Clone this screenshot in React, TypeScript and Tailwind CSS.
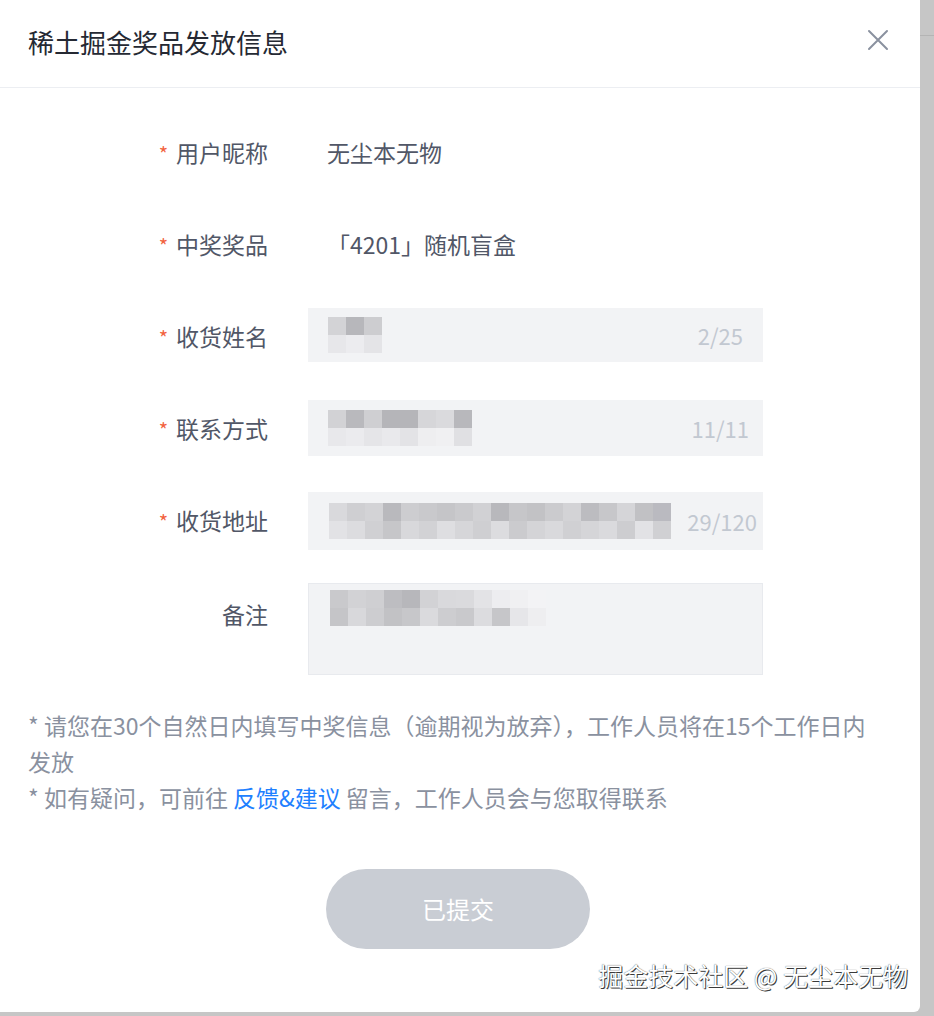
import React from "react";

const FONT = { fontFamily: '"Noto Sans CJK SC", "Noto Sans", sans-serif' };

// mosaic blocks standing in for the blurred personal data
const NAME = [
  ["#d3d3d6", "#b7b7bb", "#cdcdd0"],
  ["#e7e7ea", "#ececef", "#e4e4e7"],
];
const PHONE = [
  ["#d2d2d5", "#b9b9bd", "#cfcfd2", "#b5b5b9", "#b5b5b9", "#d6d6d9", "#dadadd", "#b8b8bc"],
  ["#e8e8eb", "#ebebee", "#e5e5e8", "#e9e9ec", "#e3e3e6", "#eeeef0", "#f0f0f2", "#e0e0e3"],
];
const ADDR = [
  ["#d9d9dc", "#cfcfd2", "#d3d3d6", "#b9b9bd", "#cdcdd0", "#c9c9cc", "#c5c5c8", "#cacacd", "#d1d1d4", "#b8b8bc", "#c6c6c9", "#c2c2c5", "#cbcbce", "#d3d3d6", "#bcbcc0", "#c7c7ca", "#d5d5d8", "#c1c1c4", "#babac0"],
  ["#e2e2e5", "#dcdcdf", "#d0d0d3", "#c6c6c9", "#d8d8db", "#d2d2d5", "#dedee1", "#d6d6d9", "#cfcfd2", "#dcdcdf", "#cbcbce", "#d4d4d7", "#d9d9dc", "#d0d0d3", "#d5d5d8", "#dadadd", "#cdcdd0", "#e2e2e5", "#d0d0d3"],
];
const NOTE = [
  ["#c9c9cc", "#d2d2d5", "#cfcfd2", "#bdbdc1", "#b7b7bb", "#d2d2d5", "#d9d9dc", "#dadadd", "#e3e3e6", "#ededf0", "#f0f0f2", "#f3f3f5"],
  ["#c5c5c8", "#d8d8db", "#cdcdd0", "#c2c2c5", "#c7c7ca", "#dadadd", "#cdcdd0", "#c9c9cc", "#dcdcdf", "#c6c6c9", "#e6e6e9", "#eeeef0"],
];

function Mosaic({ rows, cell }: { rows: string[][]; cell: number }) {
  return (
    <div className="flex flex-col">
      {rows.map((r, i) => (
        <div key={i} className="flex">
          {r.map((c, j) => (
            <div key={j} style={{ background: c, width: cell, height: 18 }} />
          ))}
        </div>
      ))}
    </div>
  );
}

function Label({ text, required = true }: { text: string; required?: boolean }) {
  return (
    <div className="flex items-center justify-end gap-[8px] text-[23px] text-[#515767]">
      {required && <span className="text-[20px] text-[#f2633e] leading-none mt-[4px]">*</span>}
      <span>{text}</span>
    </div>
  );
}

export default function App() {
  return (
    <div className="w-[934px] h-[1016px] bg-[#c6c6c6] flex overflow-hidden" style={FONT}>
      <div className="relative w-[920px] h-[1012px] bg-white rounded-br-[6px] flex flex-col shrink-0">
        <div className="h-[88px] shrink-0 border-b border-[#eceef2] flex items-center justify-between pl-[28px] pr-[31px]">
          <span className="text-[26px] text-[#252933] mt-[-4px]">稀土掘金奖品发放信息</span>
          <svg width="22" height="22" viewBox="0 0 22 22" className="mt-[-8px]">
            <path d="M2 2 L20 20 M20 2 L2 20" stroke="#8a919f" strokeWidth="2" strokeLinecap="round" />
          </svg>
        </div>

        <div className="grid grid-cols-[268px_455px] gap-x-[40px] gap-y-[36px] pt-[36px]">
          <div className="h-[56px] flex justify-end"><Label text="用户昵称" /></div>
          <div className="h-[56px] flex items-center pl-[19px] text-[23px] text-[#515767]">无尘本无物</div>

          <div className="h-[56px] flex justify-end"><Label text="中奖奖品" /></div>
          <div className="h-[56px] flex items-center pl-[19px] text-[23px] text-[#515767]">「4201」随机盲盒</div>

          <div className="h-[56px] flex justify-end"><Label text="收货姓名" /></div>
          <div className="h-[54px] bg-[#f2f3f5] flex items-center justify-between pl-[20px] pr-[20px]">
            <Mosaic rows={NAME} cell={18} />
            <span className="text-[22px] text-[#c2c8d1]">2/25</span>
          </div>

          <div className="h-[56px] flex justify-end"><Label text="联系方式" /></div>
          <div className="h-[56px] bg-[#f2f3f5] flex items-center justify-between pl-[20px] pr-[14px]">
            <Mosaic rows={PHONE} cell={18} />
            <span className="text-[22px] text-[#c2c8d1]">11/11</span>
          </div>

          <div className="h-[56px] flex justify-end"><Label text="收货地址" /></div>
          <div className="h-[58px] bg-[#f2f3f5] flex items-center justify-between pl-[21px] pr-[6px]">
            <Mosaic rows={ADDR} cell={18} />
            <span className="text-[22px] text-[#c2c8d1]">29/120</span>
          </div>

          <div className="h-[56px] flex justify-end"><Label text="备注" required={false} /></div>
          <div className="h-[92px] bg-[#f2f3f5] border border-[#e8eaee] pl-[21px] pt-[6px] mt-[-3px]">
            <Mosaic rows={NOTE} cell={18} />
          </div>
        </div>

        <div className="pl-[28px] pr-[40px] pt-[32px] text-[23px] leading-[36px] text-[#8a919f]">
          <p>* 请您在30个自然日内填写中奖信息（逾期视为放弃），工作人员将在15个工作日内发放</p>
          <p>
            * 如有疑问，可前往 <span className="text-[#1e80ff]">反馈&amp;建议</span> 留言，工作人员会与您取得联系
          </p>
        </div>

        <div className="flex justify-center pt-[54px] pr-[4px]">
          <div className="w-[264px] h-[80px] rounded-full bg-[#c9cdd4] flex items-center justify-center text-[24px] text-white">
            已提交
          </div>
        </div>

        <div className="absolute right-[12px] bottom-[18px] text-[25px] text-white [text-shadow:1px_1px_0_#3a3a3a,0_0_1px_#3a3a3a]">
          掘金技术社区 @ 无尘本无物
        </div>
      </div>
      <div className="flex-1 flex flex-col">
        <div className="mt-[35px] h-px bg-[#b4b4b4]" />
      </div>
    </div>
  );
}
